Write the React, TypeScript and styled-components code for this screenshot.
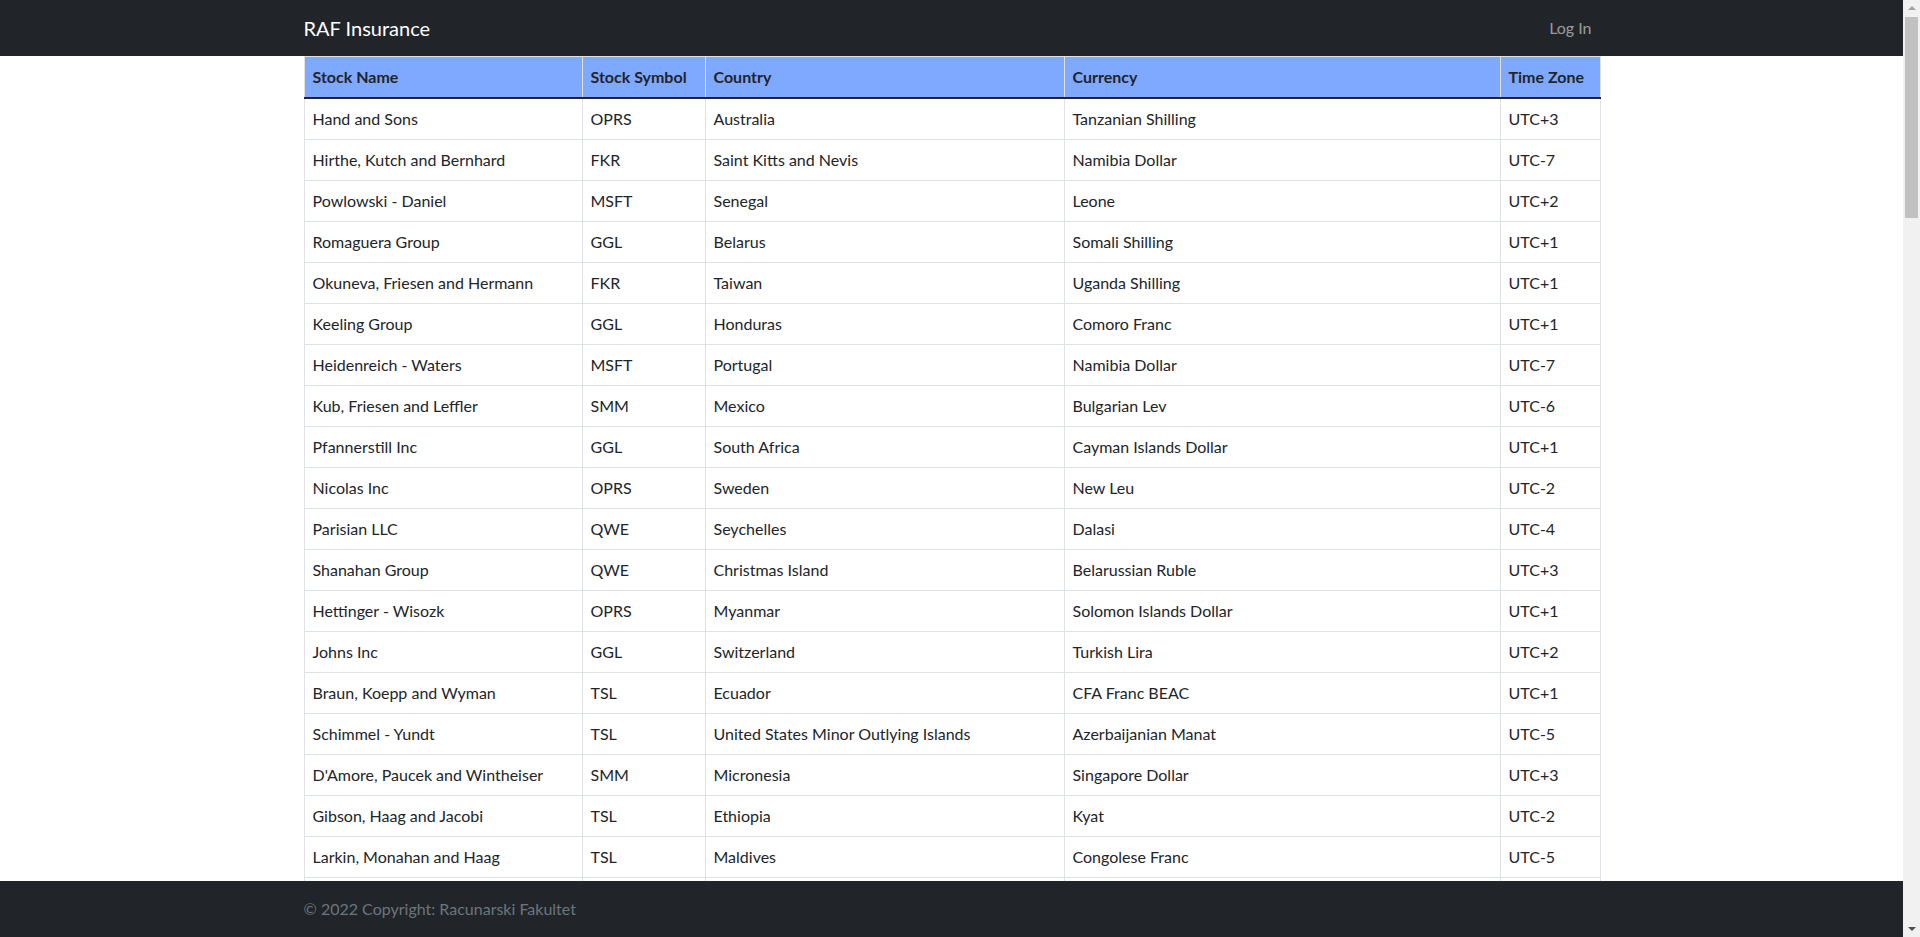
import React from "react";
import styled, { createGlobalStyle } from "styled-components";

const GlobalStyle = createGlobalStyle`
  html {
    overflow: hidden;
  }
  body {
    margin: 0;
    padding-right: 17px;
    font-family: "Lato", "Liberation Sans", sans-serif;
    font-size: 16px;
    line-height: 1.5;
    color: #212529;
    background: #fff;
  }
`;

const Container = styled.div`
  max-width: 1320px;
  margin: 0 auto;
  padding: 0 12px;
  box-sizing: border-box;
`;

const Navbar = styled.nav`
  background: #212529;
  padding: 8px 0;

  ${Container} {
    display: flex;
    align-items: center;
    justify-content: space-between;
  }
`;

const Brand = styled.a`
  color: #fff;
  font-size: 20px;
  line-height: 30px;
  padding: 5px 0;
  text-decoration: none;
`;

const NavLink = styled.a`
  color: rgba(255, 255, 255, 0.55);
  padding: 8px;
  text-decoration: none;
`;

const Table = styled.table`
  width: 100%;
  border-collapse: collapse;
  table-layout: fixed;
  margin-bottom: 56px;
`;

const Th = styled.th`
  background: #7fa8ff;
  font-weight: 700;
  text-align: left;
  padding: 8px;
  white-space: nowrap;
  border: 1px solid #dee2e6;
  border-bottom: 2px solid #212529;
`;

const Td = styled.td`
  padding: 8px;
  border: 1px solid #dee2e6;
  white-space: nowrap;
  overflow: hidden;
`;

const Footer = styled.footer`
  position: fixed;
  left: 0;
  right: 17px;
  bottom: 0;
  height: 56px;
  background: #212529;
  color: #6c757d;
  display: flex;
  align-items: center;

  ${Container} {
    width: 100%;
  }
`;

/* window scrollbar, drawn over the right edge */
const ScrollBar = styled.div`
  position: fixed;
  top: 0;
  right: 0;
  bottom: 0;
  width: 17px;
  background: #f1f1f1;
  display: flex;
  flex-direction: column;
`;

const Arrow = styled.div<{ $down?: boolean }>`
  height: 17px;
  display: flex;
  align-items: center;
  justify-content: center;

  &::before {
    content: "";
    border-left: 4px solid transparent;
    border-right: 4px solid transparent;
    ${(p) =>
      p.$down
        ? "border-top: 4px solid #505050; margin-top: 1px;"
        : "border-bottom: 4px solid #a3a3a3; margin-bottom: 1px;"}
  }
`;

const Track = styled.div`
  flex: 1;
  padding: 0 2px;
`;

const Thumb = styled.div`
  height: 201px;
  background: #c1c1c1;
`;

type Stock = [string, string, string, string, string];

const visible: Stock[] = [
  ["Hand and Sons", "OPRS", "Australia", "Tanzanian Shilling", "UTC+3"],
  ["Hirthe, Kutch and Bernhard", "FKR", "Saint Kitts and Nevis", "Namibia Dollar", "UTC-7"],
  ["Powlowski - Daniel", "MSFT", "Senegal", "Leone", "UTC+2"],
  ["Romaguera Group", "GGL", "Belarus", "Somali Shilling", "UTC+1"],
  ["Okuneva, Friesen and Hermann", "FKR", "Taiwan", "Uganda Shilling", "UTC+1"],
  ["Keeling Group", "GGL", "Honduras", "Comoro Franc", "UTC+1"],
  ["Heidenreich - Waters", "MSFT", "Portugal", "Namibia Dollar", "UTC-7"],
  ["Kub, Friesen and Leffler", "SMM", "Mexico", "Bulgarian Lev", "UTC-6"],
  ["Pfannerstill Inc", "GGL", "South Africa", "Cayman Islands Dollar", "UTC+1"],
  ["Nicolas Inc", "OPRS", "Sweden", "New Leu", "UTC-2"],
  ["Parisian LLC", "QWE", "Seychelles", "Dalasi", "UTC-4"],
  ["Shanahan Group", "QWE", "Christmas Island", "Belarussian Ruble", "UTC+3"],
  ["Hettinger - Wisozk", "OPRS", "Myanmar", "Solomon Islands Dollar", "UTC+1"],
  ["Johns Inc", "GGL", "Switzerland", "Turkish Lira", "UTC+2"],
  ["Braun, Koepp and Wyman", "TSL", "Ecuador", "CFA Franc BEAC", "UTC+1"],
  ["Schimmel - Yundt", "TSL", "United States Minor Outlying Islands", "Azerbaijanian Manat", "UTC-5"],
  ["D'Amore, Paucek and Wintheiser", "SMM", "Micronesia", "Singapore Dollar", "UTC+3"],
  ["Gibson, Haag and Jacobi", "TSL", "Ethiopia", "Kyat", "UTC-2"],
  ["Larkin, Monahan and Haag", "TSL", "Maldives", "Congolese Franc", "UTC-5"],
];

// rest of the list, below the fold
const names = ["Bode LLC", "Kunze Group", "Mraz - Kling", "Lind Inc", "Rath, Hills and Ward", "Funk LLC", "Stark - Bins", "Torp Group", "Wolff Inc"];
const symbols = ["OPRS", "FKR", "MSFT", "GGL", "SMM", "QWE", "TSL"];
const countries = ["Chile", "Norway", "Kenya", "Peru", "Japan", "Fiji", "Nepal", "Oman"];
const currencies = ["Euro", "Yen", "Rupee", "Kwacha", "Baht", "Dong", "Rand"];

const rows: Stock[] = [...visible];
for (let i = 0; i < 81; i++) {
  rows.push([
    names[i % names.length],
    symbols[(i * 3) % symbols.length],
    countries[(i * 5) % countries.length],
    currencies[(i * 2) % currencies.length],
    `UTC${i % 2 ? "+" : "-"}${(i % 7) + 1}`,
  ]);
}

const columns = [
  { label: "Stock Name", width: 278 },
  { label: "Stock Symbol", width: 123 },
  { label: "Country", width: 359 },
  { label: "Currency", width: 436 },
  { label: "Time Zone", width: 100 },
];

export default function App() {
  return (
    <>
      <GlobalStyle />
      <Navbar>
        <Container>
          <Brand href="#">RAF Insurance</Brand>
          <NavLink href="#">Log In</NavLink>
        </Container>
      </Navbar>
      <Container>
        <Table>
          <colgroup>
            {columns.map((c) => (
              <col key={c.label} style={{ width: c.width }} />
            ))}
          </colgroup>
          <thead>
            <tr>
              {columns.map((c) => (
                <Th key={c.label}>{c.label}</Th>
              ))}
            </tr>
          </thead>
          <tbody>
            {rows.map((r, i) => (
              <tr key={i}>
                {r.map((v, j) => (
                  <Td key={j}>{v}</Td>
                ))}
              </tr>
            ))}
          </tbody>
        </Table>
      </Container>
      <Footer>
        <Container>© 2022 Copyright: Racunarski Fakultet</Container>
      </Footer>
      <ScrollBar>
        <Arrow />
        <Track>
          <Thumb />
        </Track>
        <Arrow $down />
      </ScrollBar>
    </>
  );
}
